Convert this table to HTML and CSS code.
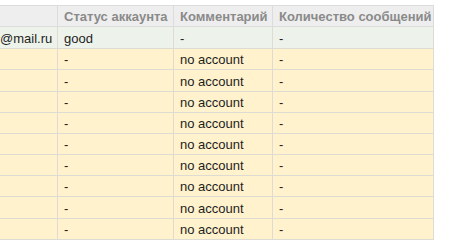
FILE: index.html
```html
<!DOCTYPE html>
<html>
<head>
<meta charset="utf-8">
<link rel="stylesheet" href="styles.css">
</head>
<body>
<div class="wrap">
<table class="grid">
  <thead>
    <tr>
      <th class="c1"></th>
      <th class="c2">Статус аккаунта</th>
      <th class="c3">Комментарий</th>
      <th class="c4">Количество сообщений</th>
    </tr>
  </thead>
  <tbody>
    <tr class="ok tall"><td class="c1">@mail.ru</td><td>good</td><td>-</td><td>-</td></tr>
    <tr class="no"><td class="c1"></td><td>-</td><td>no account</td><td>-</td></tr>
    <tr class="no tall"><td class="c1"></td><td>-</td><td>no account</td><td>-</td></tr>
    <tr class="no"><td class="c1"></td><td>-</td><td>no account</td><td>-</td></tr>
    <tr class="no"><td class="c1"></td><td>-</td><td>no account</td><td>-</td></tr>
    <tr class="no"><td class="c1"></td><td>-</td><td>no account</td><td>-</td></tr>
    <tr class="no"><td class="c1"></td><td>-</td><td>no account</td><td>-</td></tr>
    <tr class="no"><td class="c1"></td><td>-</td><td>no account</td><td>-</td></tr>
    <tr class="no tall"><td class="c1"></td><td>-</td><td>no account</td><td>-</td></tr>
    <tr class="no"><td class="c1"></td><td>-</td><td>no account</td><td>-</td></tr>
  </tbody>
</table>
</div>
</body>
</html>
```
FILE: styles.css
```css
html, body {
  margin: 0;
  padding: 0;
  background: #ffffff;
}
.wrap {
  padding-top: 5px;
  overflow: hidden;
}
.grid {
  border-collapse: collapse;
  table-layout: fixed;
  width: 434px;
  font-family: "Liberation Sans", Arial, sans-serif;
  font-size: 13px;
  color: #1e1e1e;
}
.grid th, .grid td {
  border: 1px solid #dedbd2;
  padding: 1px 6px 0;
  height: 19px;
  text-align: left;
  white-space: nowrap;
  overflow: hidden;
}
.grid th {
  background: #eeeeee;
  color: #8a8a8a;
  font-weight: bold;
  border-color: #dcdcdc;
}
.grid .tall td {
  height: 20px;
}
.grid .c1 {
  width: 57px;
  padding-left: 0;
  padding-right: 0;
  border-left: none;
}
.grid .c2 { width: 103px; }
.grid .c3 { width: 86px; }
.grid .c4 { width: 148px; }
.ok td {
  background: #edf3ea;
}
.no td {
  background: #fff2cc;
}
```
